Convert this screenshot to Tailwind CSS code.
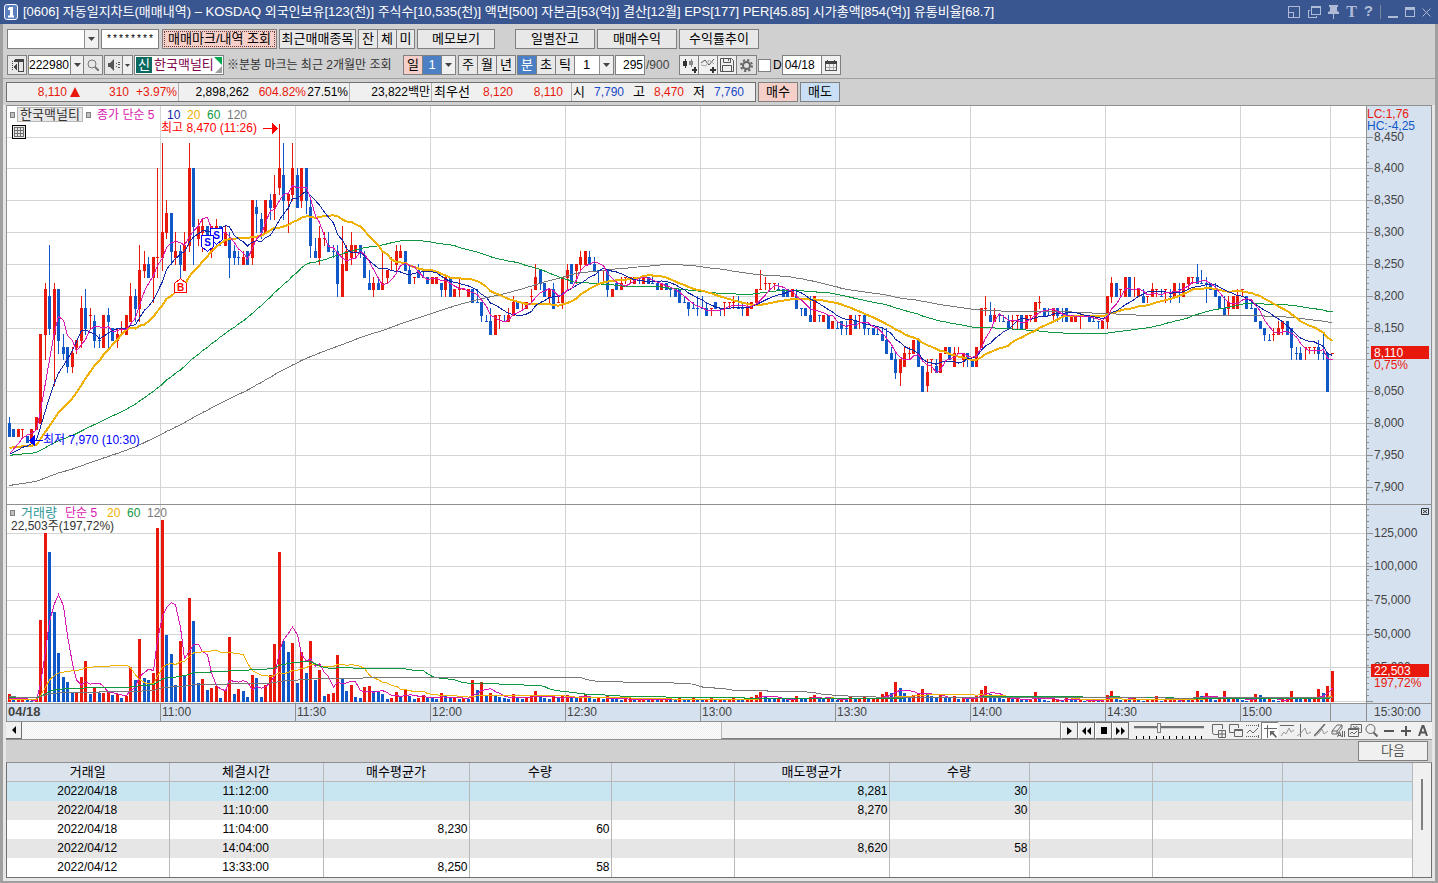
<!DOCTYPE html>
<html lang="ko">
<head>
  <meta charset="UTF-8">
  <meta name="viewport" content="width=device-width, initial-scale=1.0">
  <title>[0606] 자동일지차트(매매내역)</title>
  <script src="https://cdn.jsdelivr.net/npm/@tailwindcss/browser@4"></script>
</head>
<body class="bg-[#a0a0a0] font-['Liberation_Sans','Noto_Sans_CJK_KR',sans-serif] text-[12px] leading-[16px] text-black">

  <!-- Title bar -->
  <header class="flex h-6 items-center bg-[#3a5690] pr-[7px] pl-1 text-white">
    <svg class="shrink-0" width="14" height="16" viewBox="0 0 14 16"><rect x=".5" y=".5" width="13" height="15" rx="2.5" fill="#5c7fc0" stroke="#fff"/><path d="M4 5h2V4h2v8M4 12.5h6M7 4v8" stroke="#fff" stroke-width="2" fill="none"/></svg>
    <h1 class="ml-[5px] flex-1 truncate text-[13px]">[0606] 자동일지차트(매매내역) – KOSDAQ 외국인보유[123(천)] 주식수[10,535(천)] 액면[500] 자본금[53(억)] 결산[12월] EPS[177] PER[45.85] 시가총액[854(억)] 유통비율[68.7]</h1>
    <div class="flex items-center gap-[7px] text-[#b0bbd8]">
      <button aria-label="크기"><svg width="13" height="13" viewBox="0 0 13 13" fill="none" stroke="currentColor" shape-rendering="crispEdges"><path d="M.5 .5h11v11H.5zM.5 6.500h5v5"/></svg></button>
      <button aria-label="복제"><svg width="13" height="13" viewBox="0 0 13 13" fill="none" stroke="currentColor" shape-rendering="crispEdges"><path d="M3.500 .5h9v8h-9zM3 1.500h10M2 4.500H.5v7h8V10"/></svg></button>
      <button aria-label="고정"><svg width="11" height="14" viewBox="0 0 11 14" fill="currentColor"><path d="M1 0h9v2H9v4l2 1v2H6v5H5V9H0V7l2-1V2H1z"/></svg></button>
      <button aria-label="글꼴" class="font-['Liberation_Serif',serif] text-[16px] leading-none font-bold">T</button>
      <button aria-label="도움말" class="font-['Liberation_Mono',monospace] text-[15px] leading-none font-bold">?</button>
      <span class="h-[14px] border-l border-[#7c86a0]"></span>
      <button aria-label="최소화"><svg width="10" height="12" viewBox="0 0 10 12"><path d="M0 10h10v2H0z" fill="currentColor"/></svg></button>
      <button aria-label="최대화"><svg width="10" height="10" viewBox="0 0 10 10" fill="none" stroke="currentColor" shape-rendering="crispEdges"><path d="M.5 .5h9v9h-9zM0 1.500h10M0 2.500h10"/></svg></button>
      <button aria-label="닫기"><svg width="9" height="9" viewBox="0 0 9 9"><path d="M.5 .5l8 8M8.500 .5l-8 8" stroke="currentColor"/></svg></button>
    </div>
  </header>

  <div class="mx-[3px] mb-[2px] bg-[#d0d0d0]">

    <!-- Account row -->
    <div class="flex h-[30px] items-center gap-[2px] pl-1 text-[13px]">
      <div class="relative h-5 w-[92px] border border-[#808080] bg-white">
        <select aria-label="계좌" class="h-full w-full appearance-none bg-transparent outline-none"><option></option></select>
        <span class="pointer-events-none absolute inset-y-0 right-0 flex w-[14px] items-center justify-center border-l border-[#909090] bg-[#f0f0f0]"><svg width="7" height="4"><path d="M0 0h7L3.500 4z" fill="#444"/></svg></span>
      </div>
      <input aria-label="비밀번호" value="********" class="h-5 w-[58px] border border-[#808080] bg-white px-1 font-['Liberation_Mono',monospace] text-[10px] outline-none">
      <button class="ml-px h-5 w-[115px] border border-[#808080] bg-[#f5cfc8] p-px whitespace-nowrap"><span class="block h-full border border-dotted border-[#604040] leading-[14px]">매매마크/내역 조회</span></button>
      <button class="h-5 w-[77px] border border-[#808080] bg-[#e8e8e8] whitespace-nowrap leading-[16px]">최근매매종목</button>
      <div class="flex">
        <button class="h-5 w-5 border border-[#808080] bg-[#e8e8e8] leading-[16px]">잔</button>
        <button class="-ml-px h-5 w-5 border border-[#808080] bg-[#e8e8e8] leading-[16px]">체</button>
        <button class="-ml-px h-5 w-[19px] border border-[#808080] bg-[#e8e8e8] leading-[16px]">미</button>
      </div>
      <button class="h-5 w-[78px] border border-[#808080] bg-[#e8e8e8] leading-[16px]">메모보기</button>
      <button class="ml-[18px] h-5 w-20 border border-[#808080] bg-[#e8e8e8] leading-[16px]">일별잔고</button>
      <button class="h-5 w-20 border border-[#808080] bg-[#e8e8e8] leading-[16px]">매매수익</button>
      <button class="h-5 w-20 border border-[#808080] bg-[#e8e8e8] leading-[16px]">수익률추이</button>
    </div>

    <!-- Symbol and period row -->
    <div class="flex h-[25px] items-center border-b border-[#a0a0a0] pb-[2px] pl-1 text-[13px]">
      <button aria-label="목록" class="flex h-5 w-5 items-center justify-center border border-[#808080] bg-[#e8e8e8]"><svg width="13" height="13" viewBox="0 0 13 13" fill="none" stroke="#444" shape-rendering="crispEdges"><path d="M3.500 .5h9v12h-5V.5M3 1.500h9M3 2.500h9"/><path d="M6 4v8L2 8z" fill="#444" stroke="none"/><path d="M1.500 2v10" stroke-dasharray="1 1"/></svg></button>
      <input aria-label="종목코드" value="222980" class="ml-[1px] h-5 w-[43px] border border-[#808080] bg-white px-0 text-[12px] outline-none">
      <button aria-label="종목 목록" class="-ml-px flex h-5 w-[14px] items-center justify-center border border-[#808080] bg-[#f0f0f0]"><svg width="7" height="4"><path d="M0 0h7L3.500 4z" fill="#444"/></svg></button>
      <button aria-label="검색" class="-ml-px flex h-5 w-5 items-center justify-center border border-[#808080] bg-[#e8e8e8]"><svg width="12" height="12" viewBox="0 0 12 12" fill="none" stroke="#777"><circle cx="5" cy="5" r="4"/><path d="M8 8l4 4" stroke-width="2"/></svg></button>
      <button aria-label="소리" class="ml-[1px] flex h-5 w-[19px] items-center justify-center border border-[#808080] bg-[#e8e8e8]"><svg width="12" height="12" viewBox="0 0 12 12" fill="#555"><path d="M0 4h2l4-4v12L2 8H0z"/><path d="M8 4h1v1H8zM8 7h1v1H8zM10 3h2v1h-2zM10 5h2v1h-2zM10 8h2v1h-2z"/></svg></button>
      <button aria-label="소리 설정" class="-ml-px flex h-5 w-[11px] items-center justify-center border border-[#808080] bg-[#f0f0f0]"><svg width="5" height="3"><path d="M0 0h5L2.500 3z" fill="#444"/></svg></button>
      <div class="relative ml-[1px] flex h-5 w-[90px] border border-[#808080] bg-white p-px">
        <span class="w-4 bg-[#0a6a60] text-center text-white">신</span>
        <span class="pl-[2px] whitespace-nowrap text-[#80004c]">한국맥널티</span>
        <svg class="absolute top-px right-px" width="8" height="16"><path d="M0 0h8v8z" fill="#00a850"/><path d="M8 9v7H1z" fill="#a0a0a0"/></svg>
      </div>
      <span class="ml-[3px] w-[176px] whitespace-nowrap text-[12px] text-[#333]">※분봉 마크는 최근 2개월만 조회</span>
      <button class="h-5 w-5 border border-[#808080] bg-[#f5cfc8] leading-[16px]">일</button>
      <button class="-ml-px h-5 w-5 border border-[#808080] bg-[#4c80c4] leading-[16px] text-white">1</button>
      <button aria-label="일 선택" class="-ml-px flex h-5 w-[15px] items-center justify-center border border-[#808080] bg-[#f0f0f0]"><svg width="7" height="4"><path d="M0 0h7L3.500 4z" fill="#444"/></svg></button>
      <button class="ml-[2px] h-5 w-5 border border-[#808080] bg-[#e8e8e8] leading-[16px]">주</button>
      <button class="-ml-px h-5 w-5 border border-[#808080] bg-[#e8e8e8] leading-[16px]">월</button>
      <button class="-ml-px h-5 w-5 border border-[#808080] bg-[#e8e8e8] leading-[16px]">년</button>
      <button class="ml-[1px] h-5 w-5 border border-[#808080] bg-[#4c80c4] leading-[16px] text-white">분</button>
      <button class="-ml-px h-5 w-5 border border-[#808080] bg-[#e8e8e8] leading-[16px]">초</button>
      <button class="-ml-px h-5 w-5 border border-[#808080] bg-[#e8e8e8] leading-[16px]">틱</button>
      <div class="relative -ml-px h-5 w-10 border border-[#808080] bg-white">
        <select aria-label="주기" class="h-full w-full appearance-none bg-transparent pl-2 outline-none"><option>1</option></select>
        <span class="pointer-events-none absolute inset-y-0 right-0 flex w-[14px] items-center justify-center border-l border-[#909090] bg-[#f0f0f0]"><svg width="7" height="4"><path d="M0 0h7L3.500 4z" fill="#444"/></svg></span>
      </div>
      <input aria-label="봉 개수" value="295" class="ml-[1px] h-5 w-[30px] border border-[#808080] bg-white px-px text-right text-[12px] outline-none">
      <span class="w-[34px] pl-px text-[12px] text-[#444]">/900</span>
      <button aria-label="봉 추가" class="flex h-5 w-5 items-center justify-center border border-[#808080] bg-[#f0f0f0]"><svg width="15" height="15" viewBox="0 0 15 15" shape-rendering="crispEdges"><path d="M1 3h4v5H1zM3 1h1v9H3z" fill="#333"/><path d="M7 3h4v4H7zM9 1h1v8H9z" fill="#888"/><path d="M12 9h2v2h1v2h-1v2h-2v-2h-2v-2h2z" fill="#333"/></svg></button>
      <button aria-label="지표 추가" class="-ml-px flex h-5 w-5 items-center justify-center border border-[#808080] bg-[#f0f0f0]"><svg width="15" height="15" viewBox="0 0 15 15" fill="none"><path d="M0 5l4-3 4 5 5-6" stroke="#555"/><path d="M0 7l5 1 3-6 5 4" stroke="#aaa"/><path d="M11 9h2v2h2v2h-2v2h-2v-2H9v-2h2z" fill="#333"/></svg></button>
      <button aria-label="저장" class="-ml-px flex h-5 w-5 items-center justify-center border border-[#808080] bg-[#f0f0f0]"><svg width="14" height="14" viewBox="0 0 14 14" fill="none" stroke="#555"><path d="M.5 .5h11l2 2v11H.5zM3.500 .5v4h7v-4M2.500 13.500v-6h9v6M8.500 1v2"/></svg></button>
      <button aria-label="설정" class="-ml-px flex h-5 w-[21px] items-center justify-center border border-[#808080] bg-[#e0e0e0]"><svg width="13" height="13" viewBox="0 0 13 13" fill="none" stroke="#666"><circle cx="6.500" cy="6.500" r="3.500" stroke-width="2"/><circle cx="6.500" cy="6.500" r="5.500" stroke-width="2" stroke-dasharray="2.200 2.120"/></svg></button>
      <label class="ml-px flex items-center gap-[2px] text-[12px]"><input type="checkbox" class="h-[13px] w-[13px] appearance-none border border-[#808080] bg-white">D</label>
      <input aria-label="일자" value="04/18" class="h-5 w-10 border border-[#808080] bg-white px-[2px] text-[12px] outline-none">
      <button aria-label="달력" class="-ml-px flex h-5 w-5 items-center justify-center border border-[#808080] bg-[#f0f0f0]"><svg width="12" height="11" viewBox="0 0 12 11" shape-rendering="crispEdges"><path d="M4.500 4v7M8.500 4v7M1 7.500h10" stroke="#aaa"/><path d="M.5 1.500h11v9H.5z" fill="none" stroke="#555"/><path d="M0 1h12v3H0zM2 0h1v1H2zM9 0h1v1H9z" fill="#444"/></svg></button>
    </div>

    <!-- Quote row -->
    <div class="flex h-[26px] items-center gap-[2px] pl-[3px]">
      <div class="flex h-5 w-[750px] border border-[#707070] bg-[#f0f0f0] leading-[18px] whitespace-nowrap">
        <div class="flex w-[172px] items-center border-r border-[#b0b0b0] text-[#e8180c]">
          <span class="w-[60px] text-right">8,110</span>
          <svg class="ml-[3px]" width="10" height="10"><path d="M5 0l5 10H0z" fill="#e8180c"/></svg>
          <span class="w-[49px] text-right">310</span>
          <span class="w-12 text-right">+3.97%</span>
        </div>
        <div class="flex w-[171px] border-r border-[#b0b0b0]">
          <span class="w-[70px] text-right">2,898,262</span>
          <span class="w-[57px] text-right text-[#e8180c]">604.82%</span>
          <span class="w-[42px] text-right">27.51%</span>
        </div>
        <div class="w-[82px] border-r border-[#b0b0b0] pr-px text-right">23,822백만</div>
        <div class="flex w-[140px] border-r border-[#b0b0b0]">
          <span class="w-[37px] pl-[2px] text-[13px]">최우선</span>
          <span class="w-[44px] text-right text-[#e8180c]">8,120</span>
          <span class="w-[50px] text-right text-[#e8180c]">8,110</span>
        </div>
        <div class="flex gap-[9px] pl-px">
          <span class="text-[13px]">시</span><span class="text-[#1848c8]">7,790</span>
          <span class="text-[13px]">고</span><span class="text-[#e8180c]">8,470</span>
          <span class="text-[13px]">저</span><span class="text-[#1848c8]">7,760</span>
        </div>
      </div>
      <button class="h-5 w-10 border border-[#808080] bg-[#f5cfc8] text-[13px] leading-[16px]">매수</button>
      <button class="h-5 w-10 border border-[#808080] bg-[#c8dff5] text-[13px] leading-[16px]">매도</button>
    </div>

    <div class="border-x-[3px] border-b-[3px] border-[#e6e6e6]">
      <!-- Chart -->
      <div class="border border-[#909090] bg-white">
        <div class="flex border-b border-[#909090]">
          <div class="relative min-w-0 flex-1">
            <svg id="pricePlot" class="block h-[398px] w-full" shape-rendering="crispEdges"></svg>
            <div class="absolute top-0 left-[3px] flex h-[17px] items-center text-[12px] whitespace-nowrap">
              <span class="h-[6px] w-[5px] border border-[#808080] bg-[#c0c0c0]"></span>
              <span class="ml-[2px] h-[15px] w-[66px] border border-[#b8b8b8] bg-[#e8e8e8] text-center text-[13px] leading-[13px] text-[#333]">한국맥널티</span>
              <span class="ml-[3px] h-[6px] w-[5px] border border-[#808080] bg-[#c0c0c0]"></span>
              <span class="ml-[6px] w-[70px] text-[#d818b0]">종가 단순 5</span>
              <span class="w-5 text-[#1028a8]">10</span>
              <span class="w-5 text-[#f0b000]">20</span>
              <span class="w-5 text-[#109840]">60</span>
              <span class="text-[#787878]">120</span>
            </div>
            <button aria-label="표 보기" class="absolute top-[19px] left-[5px] flex h-[14px] w-[14px] items-center justify-center border border-black bg-[#e8e8e8]"><svg width="10" height="10" viewBox="0 0 10 10" fill="none" stroke="#707070" shape-rendering="crispEdges"><path d="M.5 .5h9v9h-9zM.5 3.500h9M.5 6.500h9M3.500 .5v9M6.500 .5v9"/></svg></button>
          </div>
          <svg id="priceAxis" class="block h-[398px] w-[65px] shrink-0 border-l border-[#909090] bg-[#d6e1f0]"></svg>
        </div>
        <div class="flex border-b border-[#909090]">
          <div class="relative min-w-0 flex-1">
            <svg id="volumePlot" class="block h-[198px] w-full" shape-rendering="crispEdges"></svg>
            <div class="absolute top-0 left-[3px] flex h-4 items-center whitespace-nowrap">
              <span class="h-[6px] w-[5px] border border-[#808080] bg-[#c0c0c0]"></span>
              <span class="ml-[6px] w-[44px] text-[13px] text-[#309898]">거래량</span>
              <span class="w-[42px] text-[#d818b0]">단순 5</span>
              <span class="w-5 text-[#f0b000]">20</span>
              <span class="w-5 text-[#109840]">60</span>
              <span class="text-[#787878]">120</span>
            </div>
            <div class="absolute top-[13px] left-[4px] text-[#333]">22,503주(197,72%)</div>
          </div>
          <svg id="volumeAxis" class="block h-[198px] w-[65px] shrink-0 border-l border-[#909090] bg-[#d6e1f0]"></svg>
        </div>
        <div class="flex h-[17px] bg-[#d6e1f0] text-[#444]">
          <span class="w-[153px] pl-px text-[13px] font-bold">04/18</span>
          <span class="w-[135px] border-l border-[#909090] pl-px">11:00</span>
          <span class="w-[135px] border-l border-[#909090] pl-px">11:30</span>
          <span class="w-[135px] border-l border-[#909090] pl-px">12:00</span>
          <span class="w-[135px] border-l border-[#909090] pl-px">12:30</span>
          <span class="w-[135px] border-l border-[#909090] pl-px">13:00</span>
          <span class="w-[135px] border-l border-[#909090] pl-px">13:30</span>
          <span class="w-[135px] border-l border-[#909090] pl-px">14:00</span>
          <span class="w-[135px] border-l border-[#909090] pl-px">14:30</span>
          <span class="w-[90px] border-l border-[#909090] pl-px">15:00</span>
          <span class="flex-1 border-l border-[#909090]"></span>
          <span class="w-[65px] border-l border-[#909090] pl-[7px]">15:30:00</span>
        </div>
      </div>

      <!-- Scroll and drawing tools -->
      <div class="flex h-[17px] bg-[#f0f0f0] text-black">
        <button aria-label="왼쪽" class="flex w-4 items-center justify-center border-r border-b border-[#707070] bg-[#f0f0f0]"><svg width="4" height="8"><path d="M4 0v8L0 4z"/></svg></button>
        <div class="flex min-w-0 flex-1 justify-end bg-[conic-gradient(#fff_25%,#ececec_0_50%,#fff_0_75%,#ececec_0)] bg-[length:2px_2px]">
          <div class="w-[340px] border-r border-b border-l border-[#808080] border-l-[#b8b8b8] bg-[#f0f0f0]"></div>
        </div>
        <button aria-label="재생" class="flex w-[17px] items-center justify-center border border-[#707070] border-l-white"><svg width="5" height="8"><path d="M0 0v8l5-4z"/></svg></button>
        <button aria-label="뒤로" class="flex w-[17px] items-center justify-center border border-[#707070] border-l-white"><svg width="9" height="8"><path d="M4 0v8L0 4zM9 0v8L5 4z"/></svg></button>
        <button aria-label="정지" class="flex w-[17px] items-center justify-center border border-[#707070] border-l-white"><svg width="6" height="7"><path d="M0 0h6v7H0z"/></svg></button>
        <button aria-label="앞으로" class="flex w-[17px] items-center justify-center border border-[#707070] border-l-white"><svg width="9" height="8"><path d="M0 0v8l4-4zM5 0v8l4-4z"/></svg></button>
        <div class="ml-[5px] w-[70px]">
          <input type="range" aria-label="속도" value="35" class="block h-[11px] w-full appearance-none bg-transparent [&::-webkit-slider-runnable-track]:h-[3px] [&::-webkit-slider-runnable-track]:border-t-2 [&::-webkit-slider-runnable-track]:border-b [&::-webkit-slider-runnable-track]:border-t-[#707070] [&::-webkit-slider-runnable-track]:border-b-[#d0d0d0] [&::-webkit-slider-thumb]:-mt-[5px] [&::-webkit-slider-thumb]:h-[10px] [&::-webkit-slider-thumb]:w-[4px] [&::-webkit-slider-thumb]:appearance-none [&::-webkit-slider-thumb]:border [&::-webkit-slider-thumb]:border-[#808080] [&::-webkit-slider-thumb]:bg-[#f0f0f0]">
          <svg class="mt-[3px] block" width="70" height="3"><path d="M2.500 0v3M9.500 0v3M15.500 0v3M22.500 0v3M29.500 0v3M35.500 0v3M42.500 0v3M48.500 0v3M55.500 0v3M61.500 0v3M67.500 0v3" stroke="#000"/></svg>
        </div>
        <div class="ml-[6px] flex items-center pr-px text-[#666]">
          <button aria-label="새 창" class="flex w-[17px] justify-center"><svg width="14" height="14" viewBox="0 0 14 14" fill="none" stroke="currentColor"><path d="M6 10.500H2.500a2 2 0 0 1-2-2v-8h10V5M6.500 6.500h7v7h-7zM10 6.500v7M6.500 10h7"/></svg></button>
          <button aria-label="창 겹치기" class="flex w-[17px] justify-center"><svg width="14" height="14" viewBox="0 0 14 14" fill="none" stroke="currentColor"><path d="M5 8.500H.5v-8h9V4M5.500 5.500h8v7h-8zM5.500 6.500h8"/></svg></button>
          <button aria-label="영역" class="flex w-[17px] justify-center"><svg width="14" height="14" viewBox="0 0 14 14" fill="none" stroke="currentColor"><path d="M0 1.500h12M0 12.500h12" stroke-dasharray="1 1"/><path d="M1 9l3-3 3 3 5-5M12.500 0v3M12.500 11v3"/></svg></button>
          <button aria-label="선택" class="flex h-[17px] w-[17px] items-center justify-center border-t border-l border-[#808080] bg-white"><svg width="13" height="13" viewBox="0 0 13 13" fill="none" stroke="currentColor"><path d="M3.500 0v13M0 3.500h13"/><path d="M6 6h5L9.500 7.500 13 12l-1 1-4-4L6 11z" fill="currentColor" stroke="none"/></svg></button>
          <button aria-label="수평선" class="flex w-[17px] justify-center"><svg width="14" height="13" viewBox="0 0 14 13" fill="none" stroke="currentColor"><path d="M0 1.500h14"/><path d="M1 12l3-4 2 2 3-6 2 4 3-2" stroke="#999"/></svg></button>
          <button aria-label="수직선" class="flex w-[17px] justify-center"><svg width="14" height="13" viewBox="0 0 14 13" fill="none" stroke="currentColor"><path d="M3.500 0v13"/><path d="M0 12l4-3 4-5 2 6 4-2" stroke="#999"/></svg></button>
          <button aria-label="추세선" class="flex w-[17px] justify-center"><svg width="14" height="13" viewBox="0 0 14 13" fill="none" stroke="currentColor"><path d="M0 12L11 0" stroke-width="1.500"/><path d="M1 12l4-3 3-4 2 5 4-3" stroke="#999"/></svg></button>
          <button aria-label="지우기" class="flex w-[17px] justify-center"><svg width="14" height="14" viewBox="0 0 14 14" fill="none" stroke="currentColor"><path d="M1 7l5-6h5L6 7zM1 7v3h5V7M6 10l5-6V1"/><path d="M6.500 13l2-5 2 5M7 11.500h3M11.500 7v6M13.500 7v6"/></svg></button>
          <button aria-label="차트 겹치기" class="flex w-[17px] justify-center"><svg width="14" height="14" viewBox="0 0 14 14" fill="none" stroke="currentColor"><path d="M3 4V.5h10.500v8H11M.5 4.500h10v8H.5zM.5 5.500h10M2 10l2-2 2 2 3-3M5 2.500l2 1 2-1 3 3"/></svg></button>
          <button aria-label="확대경" class="flex w-[17px] justify-center"><svg width="13" height="13" viewBox="0 0 13 13" fill="none" stroke="currentColor"><circle cx="5.500" cy="5" r="4.500"/><path d="M8.500 8.500l4 4" stroke-width="2"/></svg></button>
          <button aria-label="축소" class="flex w-[17px] justify-center"><svg width="10" height="10"><path d="M0 4h10v2H0z" fill="#555"/></svg></button>
          <button aria-label="확대" class="flex w-[17px] justify-center"><svg width="10" height="10"><path d="M4 0h2v4h4v2H6v4H4V6H0V4h4z" fill="#555"/></svg></button>
          <button aria-label="자동" class="flex w-[17px] justify-center"><svg width="10" height="11" viewBox="0 0 10 11" fill="none" stroke="#555" stroke-width="2"><path d="M1 11L4.500 1h1L9 11M2.500 7.500h5"/></svg></button>
        </div>
      </div>

      <!-- Trade list -->
      <div class="flex h-6 justify-end border-y border-[#909090] bg-[#d0d0d0] pt-px pr-1">
        <button class="h-5 w-[70px] border border-[#808080] bg-[#f0f0f0] text-[13px] leading-[16px] text-[#555]">다음</button>
      </div>
      <div class="flex border-r border-b border-l border-[#707070] bg-[#f0f0f0]">
        <table class="min-w-0 flex-1 table-fixed border-collapse bg-white">
          <thead class="bg-[#dbe3ed] text-[13px]">
            <tr class="h-[18px] [&>th]:border-r [&>th]:border-b [&>th]:border-[#b8b8b8] [&>th]:p-0 [&>th]:font-normal [&>th]:leading-[17px]">
              <th class="w-[162px]">거래일</th><th class="w-[154px]">체결시간</th><th class="w-[146px]">매수평균가</th><th class="w-[142px]">수량</th><th class="w-[123px]"></th><th class="w-[155px]">매도평균가</th><th class="w-[140px]">수량</th><th class="w-[123px]"></th><th class="w-[130px]"></th><th></th>
            </tr>
          </thead>
          <tbody id="trades"></tbody>
        </table>
        <div class="flex w-[18px] justify-center pt-4"><span class="h-[51px] w-[2px] bg-[#808080]"></span></div>
      </div>
    </div>
  </div>

  <script>
    const SVG = "http://www.w3.org/2000/svg";
    const RED = "#e8180c", BLUE = "#1058c8";
    const PRICE_MA = [[120, "#787878", 1], [60, "#109840", 1], [20, "#f0b000", 2], [10, "#1028a8", 1], [5, "#d818b0", 1]];
    const VOLUME_MA = [[5, "#d818b0", 1], [20, "#f0b000", 1], [60, "#109840", 1], [120, "#787878", 1]];

    // One candle per minute: colour, body top, body bottom, high, low (ticks of 10 won above 7,900)
    const candles = `
      b10,8,11,8 b9,8,9,8 r9,8,9,8 r9,9,9,8 b8,7,8,7 r9,7,9,7 r11,9,11,9 r24,10,24,10 r31,24,32,20 b30,25,38,24
      r31,24,32,16 b31,23,31,21 b22,21,24,20 b22,19,22,18 r21,19,22,18 r23,22,23,21 r28,23,30,22 b28,25,31,24 r27,27,28,25 b26,23,27,22
      b23,23,24,22 r27,22,27,22 b27,26,28,22 b25,23,25,23 r24,23,25,22 r24,24,26,24 r27,24,27,24 r30,26,32,26 b30,28,31,26 r34,28,38,26
      r35,34,37,33 b35,33,36,33 r36,33,36,29 r36,36,50,33 r40,36,54,34 r43,40,45,39 b43,37,43,35 r37,36,40,35 b37,35,38,33 r38,34,40,34
      r50,38,54,37 b50,41,50,35 r41,39,42,38 r41,40,42,37 b41,39,41,38 r41,37,41,36 r41,39,42,38 b41,39,41,38 r40,38,41,38 b39,36,40,33
      b37,36,38,35 b36,36,37,35 r36,35,37,35 b37,35,37,35 r45,36,45,35 b44,43,45,40 b42,40,43,39 r45,40,45,40 b45,44,46,42 r46,44,49,42
      r50,47,57,46 b49,45,54,42 r46,45,46,40 r50,46,54,45 b49,44,50,44 r50,45,50,44 b50,45,50,43 b44,38,45,36 b37,36,39,36 r39,36,41,35
      r39,39,40,38 b38,37,40,37 b37,37,38,36 b37,32,38,30 r35,30,41,30 r37,34,38,34 r38,36,40,35 r38,37,38,36 b38,37,38,36 b36,33,37,33
      b32,31,34,31 r32,31,33,30 b32,31,33,31 r32,31,37,31 r34,33,34,32 r34,34,36,34 r37,35,38,34 r37,36,38,36 b37,34,37,34 b34,32,35,32
      r33,33,33,32 b34,33,35,33 b33,33,34,33 b33,32,33,32 r33,32,33,32 r33,32,33,32 b32,31,32,30 r33,31,33,30 b33,30,33,30 r31,30,31,30
      r31,31,33,30 r31,31,31,31 r31,30,31,30 b31,29,31,29 b29,29,31,29 b29,27,29,26 b26,26,27,26 b26,24,28,24 r27,24,27,24 r27,27,27,25
      b26,26,27,26 r27,26,28,26 r29,27,30,27 b29,28,29,28 r29,29,29,28 r29,28,29,28 r30,30,31,29 r33,31,35,31 b34,32,34,31 b32,30,32,30
      r31,30,31,29 b31,28,32,28 r29,29,30,29 r33,29,33,28 r34,33,35,31 b35,32,35,32 r35,34,35,32 r36,35,37,34 r37,35,37,35 b36,35,37,35
      b35,34,36,34 b34,34,34,32 r34,34,34,32 b34,31,34,30 r31,30,31,30 b32,31,32,31 r32,31,33,31 r33,33,33,32 r33,33,33,32 r33,32,33,32
      b33,33,33,32 r33,32,33,32 b33,32,33,32 b32,32,33,32 b32,31,32,31 r32,31,32,31 b32,31,32,31 b31,31,31,30 b31,30,31,30 b31,29,31,29
      b29,29,30,29 b29,28,29,27 b28,28,29,28 b28,28,30,27 b28,28,30,28 b28,27,29,27 r28,28,28,27 b29,28,29,28 b28,28,28,27 r29,29,29,27
      r29,29,29,28 r29,29,30,28 b28,28,30,28 b28,28,29,27 r28,27,29,27 r29,28,29,28 r31,29,31,29 r31,31,34,31 r32,32,33,31 r32,32,32,31
      r32,32,32,31 b31,31,32,31 b31,30,31,30 b31,30,31,30 r31,30,31,30 b30,28,31,28 b28,28,28,27 b28,27,28,27 b27,26,30,26 r30,26,30,26
      b27,27,27,26 r27,26,27,26 b27,25,27,25 r26,25,26,25 b25,25,26,25 b26,25,26,24 b25,25,26,24 r27,24,27,24 b26,25,27,25 r27,27,27,25
      b27,25,27,24 b25,25,25,24 b25,24,25,24 b24,24,25,24 b24,23,25,23 b23,21,25,21 b21,20,22,20 b20,18,21,17 r20,18,20,16 r21,19,22,19
      r21,21,22,20 r23,21,23,21 b23,19,23,19 b19,15,19,15 r18,16,20,15 r20,20,20,18 b19,18,20,18 r21,18,21,18 r22,21,22,21 b22,20,22,20
      r21,19,22,19 r21,21,22,21 r21,20,21,19 b21,20,21,19 b20,19,20,19 r22,19,22,19 r28,22,28,22 r28,28,30,27 b27,26,29,26 r27,26,28,26
      b27,27,27,26 b26,26,27,26 b26,25,27,25 r26,26,27,25 r27,27,27,25 b27,25,27,25 r27,25,27,25 r27,27,27,26 r29,26,29,26 r29,29,30,28
      b28,27,28,27 b27,27,28,27 r28,27,28,26 b28,27,28,26 b27,27,28,26 b28,26,28,26 r27,26,27,26 r27,26,27,26 r27,27,27,25 b27,27,27,27
      b27,26,27,26 b26,26,27,26 b26,26,26,25 r26,25,26,25 r30,26,30,25 r32,30,33,29 b32,30,32,30 r31,31,31,30 r33,30,33,30 b33,30,33,30
      r31,31,33,30 r31,30,31,30 b30,29,31,29 r30,30,30,29 r31,30,32,30 r31,31,31,30 b30,30,31,30 r31,31,31,29 b30,30,31,29 r32,30,32,30
      b31,31,32,29 r32,30,32,30 r33,32,33,31 r33,33,33,32 b33,32,35,32 b32,32,34,32 b32,32,33,29 b32,31,32,31 b31,30,32,30 b30,28,30,28
      b28,27,30,27 r29,28,30,27 r30,28,30,28 r30,28,31,28 r31,31,31,30 b30,28,30,28 b28,28,29,28 b28,26,28,26 b26,25,26,25 b25,24,25,23
      b23,23,24,23 r24,24,25,23 r25,24,26,24 r26,25,26,24 b26,24,26,24 b25,22,25,20 b21,21,22,20 b21,20,22,20 r22,22,22,20 r22,22,22,21
      r22,22,22,21 b22,21,23,20 b21,21,24,20 b21,15,21,15 r21,21,21,21`.trim().split(/\s+/).map(s => {
        const [top, bottom, high, low] = s.slice(1).split(",").map(Number);
        return { up: s[0] === "r", top, bottom, high, low };
      });

    // Bar heights, 135 to every 100,000 shares
    const volumes = `
      8 2 3 3 2 1 3 82 169 150 90 49 25 20 9 9 25 41 8 14 9 9 10 7 8 4 6 35 22 63
      24 22 29 174 182 67 48 17 61 27 104 81 19 23 12 14 16 4 12 65 8 13 11 5 27 24 5 17 27 58
      150 61 50 59 19 50 29 61 22 32 6 8 9 47 23 11 17 5 4 15 16 11 10 8 3 4 10 5 13 6
      3 4 7 5 4 3 9 6 4 5 3 4 3 22 12 20 7 9 6 5 4 3 8 5 3 4 6 11 7 4
      3 5 4 6 7 5 4 6 8 5 3 4 3 7 4 3 2 3 4 2 3 4 2 3 2 3 4 3 2 5
      3 2 4 3 2 3 4 2 3 2 3 4 3 2 3 5 7 10 6 4 3 4 3 2 3 6 4 3 5 7
      4 3 5 3 2 4 3 6 3 4 5 3 4 5 8 10 9 20 14 9 6 7 8 13 9 6 4 7 5 4
      6 3 4 3 5 7 12 16 8 5 4 3 4 3 4 3 2 3 10 4 2 1 3 3 2 6 3 2 2 1
      2 3 2 3 7 11 3 2 3 2 5 3 1 2 3 6 1 2 3 3 2 3 2 3 11 6 9 3 2 4
      11 3 5 3 2 1 3 8 7 3 3 2 1 3 3 11 5 4 4 3 3 13 9 16 31`.trim().split(/\s+/).map(Number);

    function add(parent, tag, attrs, text) {
      const el = document.createElementNS(SVG, tag);
      for (const k in attrs) el.setAttribute(k, attrs[k]);
      if (text) el.textContent = text;
      parent.appendChild(el);
      return el;
    }

    const xOf = i => Math.floor(2 + 4.5 * i);
    const yOf = t => Math.round(380.6 - 6.364 * t);
    const vOf = v => Math.round(197 - v);
    const rect = (p, x, y, width, height, fill) => add(p, "rect", { x, y, width, height, fill });

    function grid(svg, rows, height) {
      rows.forEach(y => rect(svg, 0, y, "100%", 1, "#d4d4d4"));
      [153, 288, 423, 558, 693, 828, 963, 1098, 1233, 1323].forEach(x => rect(svg, x, 0, 1, height, "#d4d4d4"));
    }

    // Moving averages start from the values of the session before
    function averages(svg, lines, values, before, scale) {
      const all = before.concat(values);
      lines.forEach(([n, stroke, width]) => {
        let points = "";
        values.forEach((_, i) => {
          const end = before.length + i + 1;
          const sum = all.slice(end - n, end).reduce((a, b) => a + b, 0);
          points += `${xOf(i) + 0.5},${scale(sum / n) + 0.5} `;
        });
        add(svg, "polyline", { points, fill: "none", stroke, "stroke-width": width });
      });
    }

    // Price panel
    const price = document.getElementById("pricePlot");
    const ticks = [0, 5, 10, 15, 20, 25, 30, 35, 40, 45, 50, 55];
    grid(price, ticks.map(yOf), 398);
    candles.forEach((c, i) => {
      const x = xOf(i), color = c.up ? RED : BLUE;
      rect(price, x, yOf(c.high), 1, yOf(c.low) - yOf(c.high) + 1, color);
      rect(price, x - 1, yOf(c.top), 3, yOf(c.bottom) - yOf(c.top) + 1, color);
    });
    const fill = (n, v) => Array(n).fill(v);
    averages(price, PRICE_MA, candles.map(c => c.up ? c.top : c.bottom),
      [...fill(60, -4.5), ...fill(40, 4.4), ...fill(10, 7.2), ...fill(5, 5.1), ...fill(4, 4.6)], t => 380.6 - 6.364 * t);

    add(price, "text", { x: 154, y: 26, class: "fill-[#ff0000] text-[12px]" }, "최고 8,470 (11:26)");
    add(price, "path", { d: "M256 22h9v-5l6 5.500-6 5.500v-5h-9z", fill: "#ff0000" });
    add(price, "text", { x: 36, y: 338, class: "fill-[#0000ff] text-[12px]" }, "최저 7,970 (10:30)");
    add(price, "path", { d: "M36 334h-8v-5l-6 5.500 6 5.500v-5h8z", fill: "#0000ff" });
    [["M203.500 122.500h12v11l-6 5-6-5z", 209, 134, "S", "#0000ff"], ["M194.500 129.500h12v11l-6 5-6-5z", 200, 141, "S", "#0000ff"],
     ["M167.500 186.500v-9l6-5 6 5v9z", 173, 186, "B", "#ff0000"]].forEach(([d, x, y, t, c]) => {
      add(price, "path", { d, fill: "#fff", stroke: c });
      add(price, "text", { x: x + 0.5, y: y - 1, fill: c, "text-anchor": "middle", class: "text-[10px] font-bold" }, t);
    });

    // Price axis
    const pAxis = document.getElementById("priceAxis");
    for (let t = -2; t < 56; t++) rect(pAxis, 0, yOf(t), t % 5 ? 2 : 6, 1, "#909090");
    ticks.forEach(t => {
      if (t !== 20) add(pAxis, "text", { x: 7, y: yOf(t) + 4, class: "fill-[#444] text-[12px]" }, (7900 + t * 10).toLocaleString("en-US"));
    });
    rect(pAxis, 0, 0, 64, 26, "#d6e1f0");
    add(pAxis, "text", { x: 0, y: 12, fill: RED, class: "text-[12px]" }, "LC:1,76");
    add(pAxis, "text", { x: 0, y: 24, fill: BLUE, class: "text-[12px]" }, "HC:-4,25");
    rect(pAxis, 4, 240, 58, 13, RED);
    add(pAxis, "text", { x: 7, y: 251, class: "fill-white text-[12px]" }, "8,110");
    add(pAxis, "text", { x: 7, y: 263, fill: RED, class: "text-[12px]" }, "0,75%");

    // Volume panel
    const volume = document.getElementById("volumePlot");
    const levels = [[28, "125,000"], [61, "100,000"], [95, "75,000"], [129, "50,000"], [162, "25,000"]];
    grid(volume, [...levels.map(l => l[0]), 196], 198);
    volumes.forEach((v, i) => rect(volume, xOf(i) - 1, vOf(v), 3, v, v >= (volumes[i - 1] || 0) ? RED : BLUE));
    averages(volume, VOLUME_MA, volumes, [...fill(100, 6), ...fill(19, 3)], v => 197 - v);

    const vAxis = document.getElementById("volumeAxis");
    for (let k = 0; k < 33; k++) rect(vAxis, 0, Math.round(196 - k * 6), 2, 1, "#909090");
    levels.forEach(([y, label]) => {
      rect(vAxis, 0, y, 6, 1, "#909090");
      add(vAxis, "text", { x: 7, y: y + 4, class: "fill-[#444] text-[12px]" }, label);
    });
    rect(vAxis, 0, 196, 6, 1, "#909090");
    rect(vAxis, 4, 159, 58, 13, RED);
    add(vAxis, "text", { x: 7, y: 170, class: "fill-white text-[12px]" }, "22,503");
    add(vAxis, "text", { x: 7, y: 182, fill: RED, class: "text-[12px]" }, "197,72%");
    add(vAxis, "path", { d: "M54.500 3.500h7v6h-7zM56 5l4 3M60 5l-4 3", fill: "none", stroke: "#333" });

    // Trades
    const trades = [
      ["2022/04/18", "11:12:00", "", "", "", "8,281", "30", "", "", ""],
      ["2022/04/18", "11:10:00", "", "", "", "8,270", "30", "", "", ""],
      ["2022/04/18", "11:04:00", "8,230", "60", "", "", "", "", "", ""],
      ["2022/04/12", "14:04:00", "", "", "", "8,620", "58", "", "", ""],
      ["2022/04/12", "13:33:00", "8,250", "58", "", "", "", "", "", ""],
    ];
    document.getElementById("trades").innerHTML = trades.map((row, r) => {
      const bg = r === 0 ? "bg-[#c8e6f2]" : r % 2 ? "bg-[#e6e6e6]" : "bg-white";
      const cells = row.map((v, c) =>
        `<td class="${c < 2 ? "text-center" : "text-right"} border-r border-[#b8b8b8] p-0 pr-px leading-[19px]">${v}</td>`).join("");
      return `<tr class="h-[19px] ${bg}">${cells}</tr>`;
    }).join("");
  </script>
</body>
</html>
